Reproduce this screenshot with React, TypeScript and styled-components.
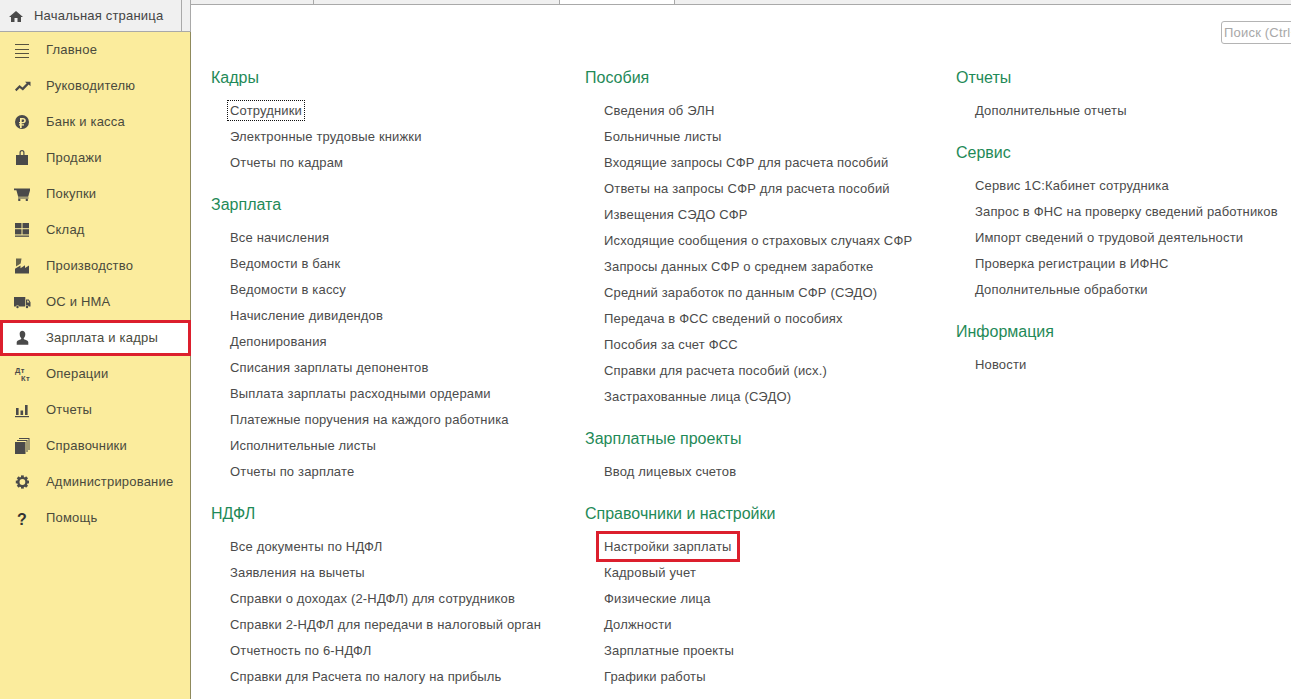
import React from "react";
import styled, { createGlobalStyle } from "styled-components";

const Global = createGlobalStyle`
  html, body { margin: 0; padding: 0; height: 100%; overflow: hidden; background: #fff; }
  #root { height: 100%; }
  * { box-sizing: border-box; }
`;

const Page = styled.div`
  display: grid;
  grid-template-columns: 191px 1fr;
  height: 699px;
  width: 1291px;
  overflow: hidden;
  font-family: "Liberation Sans", Arial, sans-serif;
  font-size: 13px;
  color: #4b4b4b;
  background: #fff;
`;

const Side = styled.aside`
  display: flex;
  flex-direction: column;
`;

const HomeBar = styled.div`
  height: 32px;
  flex: none;
  background: #f0f0f0;
  border-bottom: 1px solid #a9a9a9;
  box-shadow: inset -1px 0 0 #a9a9a9;
  padding-right: 9px;
`;

const HomeTab = styled.div`
  display: flex;
  align-items: center;
  height: 31px;
  padding-left: 4px;
  gap: 6px;
  border-right: 1px solid #a9a9a9;
  color: #444;
  letter-spacing: 0.2px;
`;

const Nav = styled.nav`
  flex: 1;
  display: flex;
  flex-direction: column;
  background: #fbec9d;
  box-shadow: inset -1px 0 0 #8f8a5c;
`;

const Item = styled.div<{ $active?: boolean }>`
  display: flex;
  align-items: center;
  height: 36px;
  flex: none;
  padding: 0 0 2px 10px;
  gap: 12px;
  letter-spacing: 0.2px;
  color: #4a4a3c;
  background: ${(p) => (p.$active ? "#fff" : "transparent")};
  box-shadow: ${(p) => (p.$active ? "inset 0 0 0 3px #dc1f2d" : "none")};
`;

const Glyph = styled.svg`
  width: 24px;
  height: 24px;
  flex: none;
  fill: #4a4a4a;
`;

const Main = styled.main`
  display: flex;
  flex-direction: column;
  min-width: 0;
  overflow: hidden;
`;

const Tabs = styled.div`
  display: flex;
  flex: none;
  height: 5px;
  background: #f0f0f0;
  border-bottom: 1px solid #a9a9a9;
`;

const TabCell = styled.div<{ $w: number; $active?: boolean }>`
  width: ${(p) => p.$w}px;
  flex: none;
  border-right: 1px solid #a9a9a9;
  background: ${(p) => (p.$active ? "#fff" : "transparent")};
`;

const SearchRow = styled.div`
  display: flex;
  justify-content: flex-end;
  flex: none;
  height: 62px;
  padding-top: 16px;
  margin-right: -60px;
`;

const Search = styled.input`
  width: 130px;
  height: 23px;
  border: 1px solid #b4b4b4;
  border-radius: 3px;
  padding: 0 2px;
  font: 13px "Liberation Sans", Arial, sans-serif;
  letter-spacing: 0.2px;
  background: #fff;
  outline: none;
  &::placeholder { color: #a8a8a8; opacity: 1; }
`;

const Columns = styled.div`
  display: grid;
  grid-template-columns: 374px 371px 1fr;
  padding-left: 20px;
  align-items: start;
`;

const Col = styled.div`
  display: flex;
  flex-direction: column;
`;

const Section = styled.section`
  display: flex;
  flex-direction: column;
  & + & { margin-top: 19px; }
`;

const Heading = styled.h2`
  margin: 0 0 10px;
  height: 20px;
  font-size: 16px;
  line-height: 22px;
  font-weight: 400;
  color: #1f8a58;
`;

const LinkRow = styled.div`
  height: 26px;
  display: flex;
  align-items: center;
  padding-left: 19px;
  letter-spacing: 0.16px;
  white-space: nowrap;
`;

const LinkText = styled.span<{ $focus?: boolean; $mark?: boolean }>`
  ${(p) => p.$focus && "outline: 1px dotted #111; outline-offset: 2px;"}
  ${(p) => p.$mark && "outline: 3px solid #dc1f2d; outline-offset: 5px;"}
`;

const GEAR_ANGLES = [0, 45, 90, 135, 180, 225, 270, 315];

const icons: Record<string, React.ReactNode> = {
  menu: (
    <g fill="#57523f">
      <rect x="5" y="7" width="14" height="1" />
      <rect x="5" y="12" width="14" height="1" />
      <rect x="5" y="16" width="14" height="1" />
      <rect x="5" y="20" width="14" height="1" />
    </g>
  ),
  trend: (
    <path d="M5 16.500l4.500-4.500 3 2.500 4.200-4.300-1.700-1.500h5.500v4.500l-1.800-1.600-5.800 6-3.200-2.600-3.300 3.200z" />
  ),
  ruble: (
    <path
      fillRule="evenodd"
      transform="translate(0 1)"
      d="M12 5a7 7 0 1 1 0 14 7 7 0 0 1 0-14zM10 8v4H9v1.300h1v.9H9v1.300h1V18h1.700v-2.500H14v-1.300h-2.300v-.9h1.300c1.700 0 2.800-1 2.800-2.700S14.700 8 13 8zm1.700 1.400h1.200c.9 0 1.300.5 1.300 1.200 0 .8-.4 1.300-1.300 1.300h-1.200z"
    />
  ),
  bag: (
    <path
      fillRule="evenodd"
      d="M6 10h3.500V7.500a2.500 2.500 0 0 1 5 0V10H18v10H6zm4.700 0h2.600V7.500a1.300 1.300 0 0 0-2.600 0z"
    />
  ),
  cart: (
    <>
      <path d="M4 7.500h16v2l-1.800 6.300H8.200L6.400 9.300H4z" />
      <rect x="8" y="16.500" width="10.500" height="1" />
      <circle cx="9.300" cy="18.900" r="1.200" />
      <circle cx="16.800" cy="18.900" r="1.200" />
    </>
  ),
  stock: (
    <>
      <rect x="5" y="6" width="6.500" height="5.200" />
      <rect x="12.500" y="6" width="6.500" height="5.200" />
      <rect x="5" y="12.200" width="6.500" height="5.200" />
      <rect x="12.500" y="12.200" width="6.500" height="5.200" />
      <rect x="5" y="18.500" width="14" height="1.300" />
    </>
  ),
  factory: (
    <>
      <path fill="#66644c" d="M6 5.500h5.500l-.8 5L6 13.500z" />
      <path d="M5 20.500V15.800l5.500-3.300v2.800l4.500-3v2.700l4-2.500v8z" />
    </>
  ),
  truck: (
    <>
      <path d="M4 8h11.300v9.500H4z" />
      <path fillRule="evenodd" d="M16 10.500h2.800l1.700 2.700v4.300H16zm1.200 1v1.900h2.100l-1.100-1.900z" />
      <circle cx="7.500" cy="18" r="1.800" fill="#fbec9d" />
      <circle cx="7.500" cy="18" r="1.200" />
      <circle cx="17" cy="18" r="1.800" fill="#fbec9d" />
      <circle cx="17" cy="18" r="1.200" />
    </>
  ),
  person: (
    <path
      transform="translate(0 .7)"
      d="M12 5a3.300 3.300 0 0 1 3.300 3.600c0 1.900-.8 3.300-1.600 4 0 .8.500 1.100 1.600 1.500 1.700.6 3 1.200 3 2.500V19H6.700v-2.400c0-1.300 1.300-1.900 3-2.500 1.100-.4 1.600-.7 1.600-1.500-.8-.7-1.600-2.100-1.600-4A3.300 3.300 0 0 1 12 5z"
    />
  ),
  dtkt: (
    <>
      <text x="5" y="12" fontSize="7.500" fontWeight="700" fontFamily="Liberation Sans" letterSpacing="0.3">Дт</text>
      <text x="11" y="20" fontSize="7.500" fontWeight="700" fontFamily="Liberation Sans" letterSpacing="0.3">Кт</text>
    </>
  ),
  bars: (
    <g transform="translate(0 1)">
      <rect x="6" y="10" width="2.600" height="7" />
      <rect x="10.500" y="12.500" width="2.600" height="4.500" />
      <rect x="15" y="7" width="2.600" height="10" />
      <rect x="5" y="18" width="14" height="1.200" />
    </g>
  ),
  books: (
    <>
      <rect x="5" y="9" width="10.500" height="12" />
      <path d="M7 7h10.500v12H16.500V8H7z" />
      <path d="M9 5h10.500v12h-1V6H9z" />
    </>
  ),
  gear: (
    <g transform="translate(12.400 13)">
      <circle r="4.100" fill="none" stroke="#4a4a4a" strokeWidth="2.400" />
      {GEAR_ANGLES.map((a) => (
        <rect key={a} x="-1.400" y="-6.600" width="2.800" height="2.400" transform={`rotate(${a})`} />
      ))}
    </g>
  ),
  help: (
    <text x="12" y="20" textAnchor="middle" fontSize="16" fontWeight="700" fontFamily="Liberation Sans" fill="#333">?</text>
  ),
  home: <path d="M12 7l7 6h-2v5h-3.500v-4h-3v4H7v-5H5z" />,
};

const Icon = ({ name }: { name: string }) => <Glyph viewBox="0 0 24 24">{icons[name]}</Glyph>;

const nav: [string, string][] = [
  ["menu", "Главное"],
  ["trend", "Руководителю"],
  ["ruble", "Банк и касса"],
  ["bag", "Продажи"],
  ["cart", "Покупки"],
  ["stock", "Склад"],
  ["factory", "Производство"],
  ["truck", "ОС и НМА"],
  ["person", "Зарплата и кадры"],
  ["dtkt", "Операции"],
  ["bars", "Отчеты"],
  ["books", "Справочники"],
  ["gear", "Администрирование"],
  ["help", "Помощь"],
];

type SectionData = { title: string; links: string[] };

const columns: SectionData[][] = [
  [
    { title: "Кадры", links: ["Сотрудники", "Электронные трудовые книжки", "Отчеты по кадрам"] },
    {
      title: "Зарплата",
      links: [
        "Все начисления",
        "Ведомости в банк",
        "Ведомости в кассу",
        "Начисление дивидендов",
        "Депонирования",
        "Списания зарплаты депонентов",
        "Выплата зарплаты расходными ордерами",
        "Платежные поручения на каждого работника",
        "Исполнительные листы",
        "Отчеты по зарплате",
      ],
    },
    {
      title: "НДФЛ",
      links: [
        "Все документы по НДФЛ",
        "Заявления на вычеты",
        "Справки о доходах (2-НДФЛ) для сотрудников",
        "Справки 2-НДФЛ для передачи в налоговый орган",
        "Отчетность по 6-НДФЛ",
        "Справки для Расчета по налогу на прибыль",
      ],
    },
  ],
  [
    {
      title: "Пособия",
      links: [
        "Сведения об ЭЛН",
        "Больничные листы",
        "Входящие запросы СФР для расчета пособий",
        "Ответы на запросы СФР для расчета пособий",
        "Извещения СЭДО СФР",
        "Исходящие сообщения о страховых случаях СФР",
        "Запросы данных СФР о среднем заработке",
        "Средний заработок по данным СФР (СЭДО)",
        "Передача в ФСС сведений о пособиях",
        "Пособия за счет ФСС",
        "Справки для расчета пособий (исх.)",
        "Застрахованные лица (СЭДО)",
      ],
    },
    { title: "Зарплатные проекты", links: ["Ввод лицевых счетов"] },
    {
      title: "Справочники и настройки",
      links: ["Настройки зарплаты", "Кадровый учет", "Физические лица", "Должности", "Зарплатные проекты", "Графики работы"],
    },
  ],
  [
    { title: "Отчеты", links: ["Дополнительные отчеты"] },
    {
      title: "Сервис",
      links: [
        "Сервис 1С:Кабинет сотрудника",
        "Запрос в ФНС на проверку сведений работников",
        "Импорт сведений о трудовой деятельности",
        "Проверка регистрации в ИФНС",
        "Дополнительные обработки",
      ],
    },
    { title: "Информация", links: ["Новости"] },
  ],
];

export default function App() {
  return (
    <Page>
      <Global />
      <Side>
        <HomeBar>
          <HomeTab>
            <Icon name="home" />
            Начальная страница
          </HomeTab>
        </HomeBar>
        <Nav>
          {nav.map(([icon, label]) => (
            <Item key={label} $active={label === "Зарплата и кадры"}>
              <Icon name={icon} />
              {label}
            </Item>
          ))}
        </Nav>
      </Side>
      <Main>
        <Tabs>
          <TabCell $w={123} />
          <TabCell $w={246} />
          <TabCell $w={115} $active />
        </Tabs>
        <SearchRow>
          <Search placeholder="Поиск (Ctrl+F)" />
        </SearchRow>
        <Columns>
          {columns.map((sections, i) => (
            <Col key={i}>
              {sections.map((s) => (
                <Section key={s.title}>
                  <Heading>{s.title}</Heading>
                  {s.links.map((l) => (
                    <LinkRow key={l}>
                      <LinkText $focus={l === "Сотрудники"} $mark={l === "Настройки зарплаты"}>
                        {l}
                      </LinkText>
                    </LinkRow>
                  ))}
                </Section>
              ))}
            </Col>
          ))}
        </Columns>
      </Main>
    </Page>
  );
}
